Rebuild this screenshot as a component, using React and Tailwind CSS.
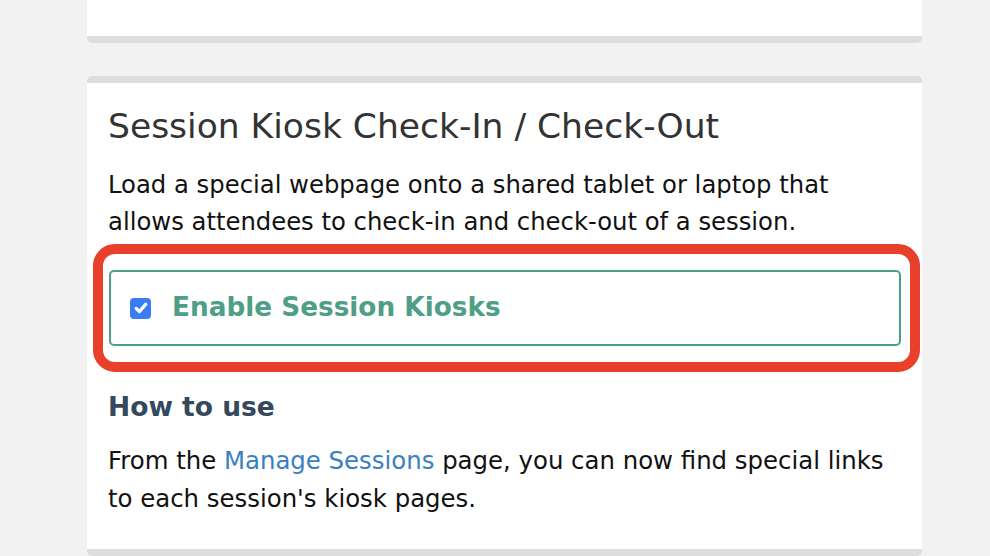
export default function App() {
  const font = { fontFamily: '"DejaVu Sans", "Liberation Sans", sans-serif' };
  return (
    <div className="min-h-[556px] w-[990px] bg-[#f2f2f2] overflow-hidden" style={font}>
      <div className="ml-[87px] w-[835px]">
        <div className="h-[43px] bg-white border-b-[7px] border-[#dddddd] rounded-b-[5px]"></div>
        <div className="mt-[33px] bg-white border-t-[7px] border-b-[7px] border-[#dddddd] rounded-[5px] px-[21px] pt-[23px] pb-[32px]">
          <h2 className="text-[34.5px] leading-[40px] text-[#333333] whitespace-nowrap">Session Kiosk Check-In / Check-Out</h2>
          <p className="mt-[20px] text-[24.3px] leading-[37px] text-[#111111] whitespace-nowrap">
            Load a special webpage onto a shared tablet or laptop that<br />allows attendees to check-in and check-out of a session.
          </p>
          <div className="mt-[4px] -ml-[15px] -mr-[19px] border-[10px] border-[#e8402a] rounded-[22px] py-[16px] pl-[6px] pr-[9px]">
            <div className="border-2 border-[#4f9e86] rounded-[5px] h-[76px] flex items-center pl-[19px]">
              <span className="w-[21px] h-[21px] rounded-[4px] bg-[#3b7cf5] flex items-center justify-center">
                <svg width="16" height="16" viewBox="0 0 14 14" fill="none">
                  <path d="M2.8 7.4 L5.6 10.2 L11.2 3.6" stroke="white" strokeWidth="2.8" strokeLinecap="round" strokeLinejoin="round" />
                </svg>
              </span>
              <span className="ml-[21px] text-[26.3px] font-bold text-[#4f9e86]">Enable Session Kiosks</span>
            </div>
          </div>
          <h3 className="mt-[17px] text-[26.5px] leading-[36px] font-bold text-[#34495e]">How to use</h3>
          <p className="mt-[17px] text-[24.4px] leading-[37.5px] text-[#111111] whitespace-nowrap">
            From the <a className="text-[#3a7fc1]">Manage Sessions</a> page, you can now find special links<br />to each session's kiosk pages.
          </p>
        </div>
      </div>
    </div>
  );
}
